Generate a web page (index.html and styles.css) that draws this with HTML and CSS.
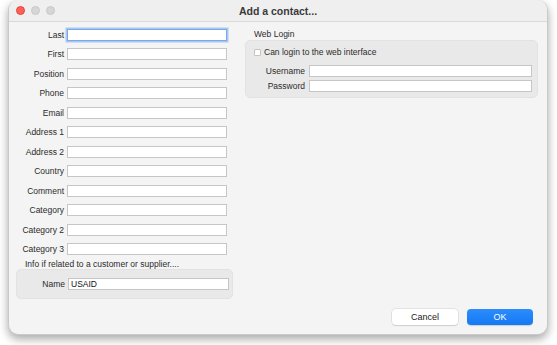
FILE: index.html
```html
<!DOCTYPE html>
<html lang="en">
<head>
    <meta charset="UTF-8">
    <title>Add a contact...</title>
    <link rel="stylesheet" href="styles.css">
</head>
<body>
    <div class="window">
        <div class="titlebar">
            <div class="lights">
                <span class="light red"></span>
                <span class="light"></span>
                <span class="light"></span>
            </div>
            <div class="title">Add a contact...</div>
        </div>

        <div class="content">
            <div class="col-left">
                <div class="row"><label>Last</label><input type="text" class="focused"></div>
                <div class="row"><label>First</label><input type="text"></div>
                <div class="row"><label>Position</label><input type="text"></div>
                <div class="row"><label>Phone</label><input type="text"></div>
                <div class="row"><label>Email</label><input type="text"></div>
                <div class="row"><label>Address 1</label><input type="text"></div>
                <div class="row"><label>Address 2</label><input type="text"></div>
                <div class="row"><label>Country</label><input type="text"></div>
                <div class="row"><label>Comment</label><input type="text"></div>
                <div class="row"><label>Category</label><input type="text"></div>
                <div class="row"><label>Category 2</label><input type="text"></div>
                <div class="row"><label>Category 3</label><input type="text"></div>
                <p class="note">Info if related to a customer or supplier....</p>
                <div class="group related">
                    <div class="row"><label>Name</label><input type="text" value="USAID"></div>
                </div>
            </div>

            <div class="col-right">
                <p class="group-title">Web Login</p>
                <div class="group web">
                    <div class="check-row">
                        <span class="checkbox"></span>
                        <span>Can login to the web interface</span>
                    </div>
                    <div class="web-row"><label>Username</label><input type="text"></div>
                    <div class="web-row"><label>Password</label><input type="password"></div>
                </div>
            </div>
        </div>

        <div class="actions">
            <button class="btn">Cancel</button>
            <button class="btn primary">OK</button>
        </div>
    </div>
</body>
</html>
```

FILE: styles.css
```css
* {
    margin: 0;
    padding: 0;
    box-sizing: border-box;
    font-family: 'Liberation Sans', Arial, sans-serif;
}

body {
    background: #ffffff;
    width: 557px;
    height: 345px;
    overflow: hidden;
}

.window {
    margin-left: 8px;
    width: 540px;
    height: 335px;
    background: #f4f4f4;
    border: 1px solid #c9c9c9;
    border-top: none;
    border-radius: 10px;
    box-shadow: 0 4px 10px rgba(0, 0, 0, 0.35);
    display: flex;
    flex-direction: column;
    overflow: hidden;
}

.titlebar {
    height: 22px;
    flex: 0 0 22px;
    border-bottom: 1px solid #d9d9d9;
    background: #efefef;
    display: flex;
    align-items: center;
    position: relative;
}

.lights {
    display: flex;
    gap: 6px;
    padding-left: 7px;
}

.light {
    width: 9px;
    height: 9px;
    border-radius: 50%;
    background: #d6d6d6;
    border: 1px solid #c8c8c8;
}

.light.red {
    background: #fe5f57;
    border-color: #e2463f;
}

.title {
    position: absolute;
    left: 0;
    right: 0;
    text-align: center;
    font-size: 10.5px;
    font-weight: bold;
    color: #3a3a3a;
}

.content {
    flex: 1;
    display: flex;
    gap: 12px;
    padding: 3px 0 0 7px;
}

.col-left {
    width: 217px;
}

.row {
    height: 19.5px;
    width: 211px;
    display: flex;
    align-items: center;
    gap: 3px;
}

label {
    flex: 1;
    text-align: right;
    white-space: nowrap;
    font-size: 8.5px;
    color: #2b2b2b;
}

input {
    width: 160px;
    height: 12px;
    border: 1px solid #c6c6c6;
    background: #ffffff;
    font-size: 8.5px;
    padding: 0 2px;
    color: #111;
    outline: none;
}

input.focused {
    border-color: #7aa8ec;
    box-shadow: 0 0 0 1.5px #a9c7f3;
}

.note {
    height: 10px;
    line-height: 10px;
    font-size: 8.5px;
    color: #2b2b2b;
    padding-left: 9px;
}

.group {
    background: #e9e9e9;
    border: 1px solid #e2e2e2;
    border-radius: 5px;
}

.related {
    height: 30px;
    padding-top: 4px;
}

.related .row {
    width: 212px;
}

.related input {
    width: 161px;
}

.col-right {
    width: 293px;
}

.group-title {
    margin-top: 4px;
    height: 11px;
    line-height: 11px;
    font-size: 8.5px;
    color: #2b2b2b;
    padding-left: 9px;
}

.web {
    height: 58px;
    padding: 5px 5px 0 0;
}

.check-row {
    height: 12px;
    display: flex;
    align-items: center;
    gap: 3px;
    padding-left: 8px;
    font-size: 8.5px;
    color: #2b2b2b;
    margin-bottom: 7px;
}

.checkbox {
    width: 7px;
    height: 7px;
    background: #fff;
    border: 1px solid #c4c4c4;
    border-radius: 1px;
}

.web-row {
    display: flex;
    align-items: center;
    gap: 4px;
    margin-bottom: 3px;
}

.web-row label {
    flex: 0 0 59px;
}

.web-row input {
    width: 224px;
}

.actions {
    display: flex;
    justify-content: flex-end;
    gap: 9px;
    padding: 0 14px 9px 0;
}

.btn {
    width: 66px;
    height: 16px;
    border: none;
    border-radius: 4px;
    background: #ffffff;
    box-shadow: 0 0 0 0.5px #cfcfcf, 0 1px 1px rgba(0, 0, 0, 0.15);
    font-size: 9px;
    color: #222;
}

.btn.primary {
    background: linear-gradient(#2c8cfb, #1479f4);
    color: #fff;
    box-shadow: 0 1px 1px rgba(0, 0, 0, 0.15);
}
```
